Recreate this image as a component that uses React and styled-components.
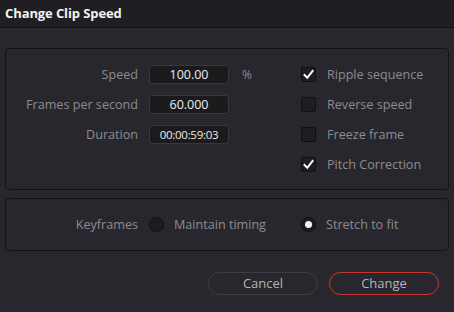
import React from "react";
import styled, { createGlobalStyle } from "styled-components";

const Global = createGlobalStyle`
  html, body { margin: 0; padding: 0; background: #28272d; }
  body { font-family: "Open Sans", "Noto Sans", sans-serif; }
  * { box-sizing: border-box; }
`;

const Dialog = styled.div`
  width: 454px;
  height: 312px;
  background: #28272d;
  display: flex;
  flex-direction: column;
  overflow: hidden;
`;

const TitleBar = styled.div`
  height: 28px;
  flex: none;
  background: #1f1e23;
  border-bottom: 1px solid #111114;
  display: flex;
  align-items: center;
  padding: 0 0 2px 5px;
  color: #f2f2f2;
  font-weight: 700;
  font-size: 13px;
  letter-spacing: -0.1px;
`;

const Body = styled.div`
  padding: 20px 5px 0 5px;
  display: flex;
  flex-direction: column;
`;

const Panel = styled.div`
  border: 1px solid #141417;
  border-radius: 4px;
  display: grid;
  grid-template-columns: 132px 141px 1fr;
  column-gap: 11px;
  align-items: ${(p) => (p.$center ? "center" : "start")};
  align-content: ${(p) => (p.$center ? "center" : "start")};
  height: ${(p) => p.$h}px;
  padding-top: ${(p) => p.$pt || 0}px;
  margin-top: ${(p) => p.$mt || 0}px;
`;

const Fields = styled.div`
  grid-column: 1 / 3;
  display: grid;
  grid-template-columns: 132px 80px 1fr;
  grid-auto-rows: 30px;
  column-gap: 11px;
  align-items: center;
`;

const Label = styled.div`
  text-align: right;
  color: #8c8c90;
  font-size: 12.6px;
  white-space: nowrap;
`;

const ValueBox = styled.div`
  height: 19px;
  background: #1b1b1d;
  border: 1px solid #38383c;
  border-radius: 3px;
  color: #ececec;
  font-size: ${(p) => p.$fs || 12.5}px;
  display: flex;
  align-items: center;
  justify-content: center;
  letter-spacing: ${(p) => (p.$tight ? "-0.3px" : "0")};
`;

const Unit = styled.div`
  color: #8c8c90;
  font-size: 12px;
  padding-left: 2px;
`;

const Options = styled.div`
  display: grid;
  grid-auto-rows: 30px;
  align-items: center;
`;

const Option = styled.div`
  display: flex;
  align-items: center;
  gap: ${(p) => p.$gap || 11}px;
  color: #8c8c90;
  font-size: 12.6px;
  white-space: nowrap;
`;

const Box = styled.div`
  width: 15px;
  height: 15px;
  background: #1e1e21;
  border: 1px solid #101012;
  border-radius: 2px;
  display: flex;
  align-items: center;
  justify-content: center;
`;

const Radio = styled.div`
  width: 15px;
  height: 15px;
  border-radius: 50%;
  background: #1d1d20;
  border: 1px solid #0f0f11;
  display: flex;
  align-items: center;
  justify-content: center;
  &::after {
    content: "";
    width: 7px;
    height: 7px;
    border-radius: 50%;
    background: #f4f4f4;
    display: ${(p) => (p.$on ? "block" : "none")};
  }
`;

const Footer = styled.div`
  display: flex;
  justify-content: flex-end;
  gap: 11px;
  padding-right: 10px;
  margin-top: 21px;
`;

const Button = styled.div`
  width: 110px;
  height: 23px;
  border-radius: 12px;
  border: 1px solid ${(p) => (p.$primary ? "#c8372e" : "#3e3e44")};
  color: #b4b4b8;
  font-size: 13px;
  display: flex;
  align-items: center;
  justify-content: center;
  padding-bottom: 1px;
`;

const Check = () => (
  <svg width="11" height="11" viewBox="0 0 11 11">
    <path d="M1.5 6 L4.3 8.8 L9.6 2" fill="none" stroke="#fafafa" strokeWidth="2" strokeLinecap="square" />
  </svg>
);

const CheckItem = ({ on, children }) => (
  <Option>
    <Box>{on && <Check />}</Box>
    {children}
  </Option>
);

export default function App() {
  return (
    <>
      <Global />
      <Dialog>
        <TitleBar>Change Clip Speed</TitleBar>
        <Body>
          <Panel $h={142} $pt={10}>
            <Fields>
              <Label>Speed</Label>
              <ValueBox>100.00</ValueBox>
              <Unit>%</Unit>
              <Label>Frames per second</Label>
              <ValueBox>60.000</ValueBox>
              <div />
              <Label>Duration</Label>
              <ValueBox $fs={11.5} $tight>00:00:59:03</ValueBox>
              <div />
            </Fields>
            <Options>
              <CheckItem on>Ripple sequence</CheckItem>
              <CheckItem>Reverse speed</CheckItem>
              <CheckItem>Freeze frame</CheckItem>
              <CheckItem on>Pitch Correction</CheckItem>
            </Options>
          </Panel>
          <Panel $h={53} $mt={8} $center>
            <Label>Keyframes</Label>
            <Option $gap={10}>
              <Radio />
              Maintain timing
            </Option>
            <Option $gap={10}>
              <Radio $on />
              Stretch to fit
            </Option>
          </Panel>
          <Footer>
            <Button>Cancel</Button>
            <Button $primary>Change</Button>
          </Footer>
        </Body>
      </Dialog>
    </>
  );
}
